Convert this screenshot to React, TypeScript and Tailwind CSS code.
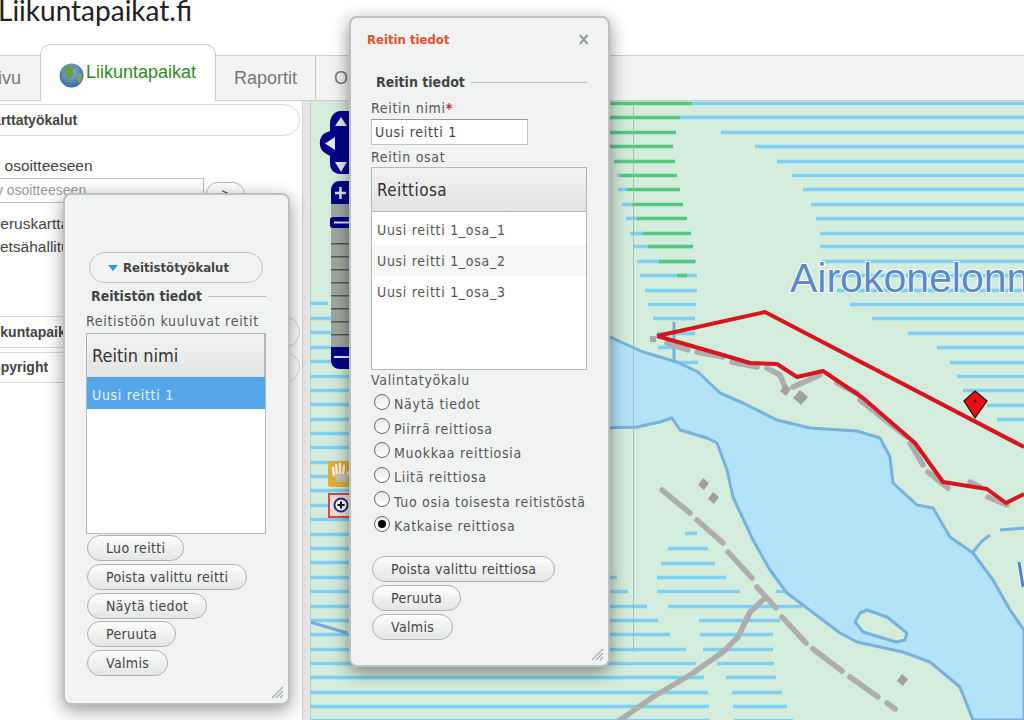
import { ReactNode } from "react";

// [y, x1, x2] blue hatching rows of the map
const blueRows: number[][] = [
  [103, 692, 1024], [117.4, 680, 1024], [131.8, 721, 1024], [146.2, 755, 1024], [160.6, 777, 1024],
  [175, 617, 620], [175, 792, 1024], [189.4, 618, 627], [189.4, 803, 1024], [203.8, 622, 632], [203.8, 811, 1024],
  [218.2, 626, 637], [218.2, 816, 1024], [232.6, 630, 643], [232.6, 820, 1024], [246.4, 633, 693], [246.4, 820, 1024],
  [261, 637, 696], [261, 822, 1024], [275, 640, 697], [275, 835, 1024], [289.6, 645, 697], [289.6, 837, 1024],
  [304, 648, 696], [304, 850, 1024], [318.4, 653, 695], [318.4, 872, 1024], [332.8, 657, 695], [332.8, 908, 1024],
  [347.2, 658, 688], [347.2, 937, 1024], [361.6, 677, 698], [361.6, 950, 1024], [376, 957, 1024], [390.4, 963, 1024],
  [404.8, 987, 1024], [419.2, 997, 1024],
  [533, 685, 697], [548, 668, 708], [563, 661, 715], [577, 610, 617], [577, 657, 726], [591, 610, 628], [591, 657, 740],
  [591, 776, 785], [606, 610, 647], [606, 668, 802], [620, 610, 658], [620, 699, 780], [634, 610, 670], [634, 700, 773],
  [649, 610, 686], [649, 703, 773], [663, 310, 696], [663, 717, 774], [677, 310, 704], [677, 726, 776], [692, 310, 708],
  [692, 732, 782], [706, 310, 709], [706, 733, 787], [720, 310, 710], [720, 734, 793],
  [303, 310, 328], [318, 310, 335], [332, 310, 337], [347, 310, 350], [361, 310, 350], [376, 310, 350], [390, 310, 350],
  [404, 310, 350], [419, 310, 350], [433, 310, 350], [447, 310, 350], [462, 310, 350], [476, 310, 350], [490, 310, 350],
  [505, 310, 350], [519, 310, 350], [534, 310, 350], [548, 310, 350], [562, 310, 350], [577, 310, 350], [591, 310, 350],
  [606, 310, 350], [620, 310, 350], [634, 310, 350], [649, 310, 350],
];

const greenRows: number[][] = [
  [103, 610, 692], [117.4, 610, 680], [131.8, 610, 676], [146.2, 610, 673], [160.6, 614, 675], [175, 620, 677],
  [189.4, 627, 680], [203.8, 632, 683], [218.2, 637, 687], [232.6, 643, 691], [246.4, 648, 693], [261, 659, 695],
  [275, 677, 687],
];

const roads = [
  "M662 490L690 513", "M697 520L723 543", "M728 552L752 578", "M757 587L776 608", "M782 617L806 643",
  "M813 649L842 671", "M850 677L878 697", "M887 703L895 709",
  "M765 598L750 612L738 637L723 652L690 675L653 697L620 720",
  "M667 343L688 350", "M697 352L723 357", "M732 362L757 367", "M767 368L780 375L785 387", "M793 387L820 375",
  "M837 383L857 393", "M860 400L907 437", "M910 443L923 465", "M928 472L948 488", "M970 482L980 487", "M988 497L1007 505",
];

const Map = () => (
  <svg className="block w-full h-full" viewBox="310 101 714 619" preserveAspectRatio="none">
    <rect x="310" y="101" width="714" height="619" fill="#d4ecdb" />
    {blueRows.map(([y, a, b], i) => (
      <line key={i} x1={a} x2={b} y1={Math.round(y) + 0.5} y2={Math.round(y) + 0.5} stroke="#7fcff2" strokeWidth="3.5" />
    ))}
    {greenRows.map(([y, a, b], i) => (
      <line key={i} x1={a} x2={b} y1={Math.round(y) + 0.5} y2={Math.round(y) + 0.5} stroke="#55c880" strokeWidth="3.5" />
    ))}
    <path d="M674 322V360" stroke="#77b0d8" strokeWidth="3" />

    {/* water */}
    <path
      d="M600 333L610 337L643 352L677 362L698 372L720 393L743 403L777 420L810 428L857 431L880 438L890 457L893 483L917 505L933 508L950 537L973 553L993 580L1010 610L1024 630V720H973L960 687L930 662L903 652L857 642L840 633L787 593L770 570L753 540L733 497L727 470L717 443L707 438L680 430L672 418L660 422L637 427L600 428Z"
      fill="#b3e3f8"
      stroke="#78b2da"
      strokeWidth="3"
      strokeLinejoin="round"
    />
    <path d="M855 622L860 613L867 610L887 617L907 633L905 640L896 642L863 632Z" fill="#d4ecdb" stroke="#78b2da" strokeWidth="3" strokeLinejoin="round" />
    <path d="M973 552L982 541L990 535M1000 530L1024 528" fill="none" stroke="#78b2da" strokeWidth="3" />
    <path d="M310 622L347 633" stroke="#77a8dc" strokeWidth="3" />

    {/* roads and buildings */}
    {roads.map((d) => (
      <path key={d} d={d} fill="none" stroke="#adadad" strokeWidth="5.5" strokeLinecap="round" strokeLinejoin="round" />
    ))}
    <rect x="650" y="336" width="6" height="6" fill="#aaaaaa" />
    <path d="M902 674l6 5-5 7-6-5zM703 478l6 5-5 7-6-5zM713 492l6 5-5 7-6-5zM785 384l6 5-5 7-6-5zM800 390l8 7-7 8-8-7z" fill="#a0a0a0" />

    <text
      x="790"
      y="292"
      fontFamily="'Liberation Sans', sans-serif"
      fontSize="41"
      fill="#5a8acb"
      stroke="#ffffff"
      strokeWidth="2"
      paintOrder="stroke"
    >
      Airokonelonni
    </text>
    <path d="M1019 562L1023 587" stroke="#ffffff" strokeWidth="5" />
    <path d="M1019 562L1023 587" stroke="#4f82c6" strokeWidth="3" />

    {/* route */}
    <path
      d="M657 336L765 312L1024 447M657 336L723 355L750 363L777 364L797 377L823 371L863 398L915 443L943 482L987 489L1006 503L1024 494"
      fill="none"
      stroke="#d8141f"
      strokeWidth="4"
      strokeLinejoin="round"
    />
    <path d="M975 391L987 401L975 418L964 401Z" fill="#ee0b14" stroke="#111111" strokeWidth="1.2" strokeLinejoin="round" />
    <circle cx="975" cy="401" r="1.5" fill="#222222" />

    {/* pan and zoom control */}
    <path d="M341 111C334 111 330 117 330 124V131L325 133C318 137 318 149 325 153L330 156V163C330 170 334 174 341 174H352V111Z" fill="#00008b" />
    <path d="M341 117L347 126H335Z M325 143.5L335 137V150Z M335 162H347L341 172Z" fill="#e6e9f2" />
    <rect x="331" y="204" width="20" height="143" fill="#9fa8a0" />
    {[243, 256, 269, 282, 295, 308, 321, 334].map((y) => (
      <rect key={y} x="331" y={y} width="20" height="1.5" fill="#55584f" />
    ))}
    <path d="M331 204V191C331 184 335 181 340 181H352V204Z" fill="#00008b" />
    <path d="M335 193H346M340.5 187V199" stroke="#e4e8ee" strokeWidth="2.5" />
    <rect x="330" y="217" width="22" height="11" rx="3" fill="#00008b" />
    <path d="M334 222.5H350" stroke="#e4e8ee" strokeWidth="2" />
    <path d="M331 347H352V369H340C335 369 331 366 331 360Z" fill="#00008b" />
    <path d="M334 357H350" stroke="#e4e8ee" strokeWidth="2" />

    <rect x="328" y="461" width="24" height="26" rx="3" fill="#e0ae35" />
    <path d="M334 475L333 468M337 474L336 465M340 474L340 464M343 474L344 466M346 476L349 472" fill="none" stroke="#f4f2ea" strokeWidth="2.4" strokeLinecap="round" />
    <path d="M334 474L337 482H347L349 474Z" fill="#c9c5bb" />
    <rect x="329" y="494" width="24" height="23" fill="#f3dcd8" stroke="#d84848" strokeWidth="2" />
    <circle cx="341" cy="505" r="6.5" fill="#ffffff" stroke="#22308f" strokeWidth="2" />
    <path d="M337.5 505H344.5M341 501.5V508.5" stroke="#111111" strokeWidth="2" />

    <path d="M633.5 101V652" stroke="#9fb4a6" strokeWidth="0.8" />
    <path d="M310.5 101V720" stroke="#b8c8c0" strokeWidth="0.8" />
  </svg>
);

const Pill = ({ children }: { children: ReactNode }) => (
  <div className="w-fit h-[26px] pl-[18px] pr-[18px] flex items-center rounded-full border border-[#aeb2b2] bg-gradient-to-b from-[#fdfdfd] to-[#e4e5e5] text-[#444] tracking-[0.35px] whitespace-nowrap">
    {children}
  </div>
);

const Legend = ({ children }: { children: ReactNode }) => (
  <div className="flex items-center gap-[6px] pl-[5px] font-bold text-[#444] tracking-normal">
    <span className="whitespace-nowrap">{children}</span>
    <div className="flex-1 h-px bg-[#b9bdbd]" />
  </div>
);

const Grip = () => (
  <svg className="absolute right-[4px] bottom-[4px]" width="13" height="13" viewBox="0 0 13 13">
    <path d="M1 12L12 1M5 12L12 5M9 12L12 9" stroke="#a9adad" strokeWidth="1.3" />
  </svg>
);

const Radio = ({ label, checked }: { label: string; checked?: boolean }) => (
  <div className="flex h-[24.4px] items-center pl-[3px]">
    <span className="w-[16px] h-[16px] -mt-[5px] mr-[4px] shrink-0 rounded-full border border-[#666] bg-gradient-to-b from-[#e8e8e8] to-white flex items-center justify-center">
      {checked && <span className="w-[8px] h-[8px] rounded-full bg-black" />}
    </span>
    <span className="whitespace-nowrap">{label}</span>
  </div>
);

const Globe = () => (
  <svg width="25" height="26" viewBox="0 0 25 26" className="shrink-0 mt-[5px]">
    <defs>
      <radialGradient id="glb" cx="45%" cy="35%" r="70%">
        <stop offset="0%" stopColor="#8fb8dc" />
        <stop offset="100%" stopColor="#2f62a0" />
      </radialGradient>
    </defs>
    <circle cx="12.5" cy="12.5" r="12" fill="url(#glb)" />
    <path d="M5 5C9 2 14 2 17 4L14 8L15 12L11 15L12 20L8 17L7 12L3 11Z" fill="#6f9a55" />
    <path d="M18 11L23 10C24 14 23 18 20 21L18 17Z" fill="#7ba15c" />
  </svg>
);

const routeParts = ["Uusi reitti 1_osa_1", "Uusi reitti 1_osa_2", "Uusi reitti 1_osa_3"];

const tools = ["Näytä tiedot", "Piirrä reittiosa", "Muokkaa reittiosia", "Liitä reittiosa", "Tuo osia toisesta reitistöstä"];

export default function App() {
  return (
    <div className="relative w-[1024px] h-[720px] overflow-hidden bg-white font-['Liberation_Sans',sans-serif]">
      {/* otsikko */}
      <div className="h-[44px] overflow-hidden">
        <div className="-ml-[2px] -mt-[10px] text-[28px] leading-[40px] text-[#222] font-['Lato',sans-serif]">Liikuntapaikat.fi</div>
      </div>

      {/* välilehdet */}
      <div className="flex items-end h-[57px] text-[18px] text-[#777]">
        <div className="w-[40px] h-[46px] overflow-hidden flex items-center border-t border-b border-[#ccc] bg-[#f3f3f3]">
          <span className="-ml-[38px]">Etusivu</span>
        </div>
        <div className="w-[176px] h-[57px] flex items-center gap-[2px] pl-[18px] rounded-t-[10px] border border-b-0 border-[#ccc] bg-white text-[#2f8a1e]">
          <Globe />
          <span className="-mt-[2px]">Liikuntapaikat</span>
        </div>
        <div className="w-[100px] h-[46px] flex items-center pl-[18px] border-t border-b border-r border-[#ccc] bg-[#f3f3f3]">Raportit</div>
        <div className="flex-1 h-[46px] flex items-center pl-[18px] border-t border-b border-[#ccc] bg-[#f3f3f3]">Ohje</div>
      </div>

      <div className="flex h-[619px]">
        {/* vasen palkki */}
        <div className="w-[302px] shrink-0 overflow-hidden text-[14px] text-[#444]">
          <div className="mt-[3px] -ml-[30px] w-[330px] h-[32px] flex items-center pl-[12px] rounded-[16px] border border-[#d8d8d8] font-bold">Karttatyökalut</div>
          <div className="mt-[20px] -ml-[35px] text-[15.5px] leading-[20px] whitespace-nowrap">Siirry osoitteeseen</div>
          <div className="mt-[2px] flex items-start">
            <div className="w-[204px] h-[25px] overflow-hidden flex items-center border border-[#bbb] border-l-0 text-[#999] whitespace-nowrap">
              <span className="-ml-[29px]">Siirry osoitteeseen</span>
            </div>
            <div className="ml-[2px] mt-[4px] w-[39px] h-[24px] flex items-center justify-center rounded-full border border-[#bbb]">&gt;</div>
          </div>
          <div className="mt-[8px] -ml-[10px] text-[15.5px] leading-[20px] whitespace-nowrap">Peruskartta</div>
          <div className="mt-[3px] -ml-[13px] text-[15.5px] leading-[20px] whitespace-nowrap">Metsähallitus</div>
          <div className="mt-[59px] -ml-[30px] w-[330px] h-[32px] flex items-center pl-[13px] rounded-[16px] border border-[#d8d8d8] font-bold whitespace-nowrap">Liikuntapaikat</div>
          <div className="mt-[4px] -ml-[30px] w-[330px] h-[31px] flex items-center pl-[11px] rounded-[16px] border border-[#d8d8d8] font-bold whitespace-nowrap">Copyright</div>
        </div>
        <div className="w-[8px] shrink-0 bg-[#e6e6e6] border-l border-[#cfcfcf]" />
        <div className="flex-1 min-w-0">
          <Map />
        </div>
      </div>

      {/* Reitistötyökalut-ikkuna */}
      <div className="absolute left-[63px] top-[193px] w-[227px] h-[512px] pl-[21px] pr-[22px] pt-[57px] rounded-[8px] border-2 border-[#bcc0c0] bg-[#f1f3f3] shadow-[0_5px_18px_rgba(0,0,0,0.42)] text-[14px] leading-[18px] text-[#555] tracking-[0.7px] font-['DejaVu_Sans',sans-serif] [font-stretch:condensed]">
        <div className="ml-[3px] w-[174px] h-[31px] flex items-center gap-[5px] pl-[18px] rounded-full border border-[#c4c8c8] font-bold text-[13px] text-[#444] tracking-normal">
          <svg width="10" height="6" viewBox="0 0 10 6">
            <path d="M0 0H10L5 6Z" fill="#2f97d8" />
          </svg>
          Reitistötyökalut
        </div>
        <div className="mt-[4px]">
          <Legend>Reitistön tiedot</Legend>
        </div>
        <div className="mt-[7px] whitespace-nowrap">Reitistöön kuuluvat reitit</div>
        <div className="mt-[3px] w-[180px] h-[201px] border border-[#b5b8b8] bg-white">
          <div className="h-[43px] flex items-center pl-[5px] pr-[2px] text-[18px] text-[#333] tracking-normal bg-gradient-to-b from-[#f2f2f2] to-[#e2e3e3] border-r border-[#b5b8b8]">Reitin nimi</div>
          <div className="h-[32px] flex items-center pl-[5px] pt-[3px] bg-[#55a5ea] text-[#e8f4ff]">Uusi reitti 1</div>
        </div>
        <div className="mt-[1px] ml-px flex flex-col gap-[2.8px]">
          <Pill>Luo reitti</Pill>
          <Pill>Poista valittu reitti</Pill>
          <Pill>Näytä tiedot</Pill>
          <Pill>Peruuta</Pill>
          <Pill>Valmis</Pill>
        </div>
        <Grip />
      </div>

      {/* Reitin tiedot -ikkuna */}
      <div className="absolute left-[349px] top-[16px] w-[261px] h-[651px] pl-[20px] pr-[21px] pt-[13px] rounded-[8px] border-2 border-[#bcc0c0] bg-[#f1f3f3] shadow-[0_5px_18px_rgba(0,0,0,0.45)] text-[14px] leading-[18px] text-[#555] tracking-[0.7px] font-['DejaVu_Sans',sans-serif] [font-stretch:condensed]">
        <div className="-ml-[4px] -mr-[3px] h-[18px] flex items-center justify-between font-bold text-[13px] text-[#e2522b] tracking-normal">
          <span>Reitin tiedot</span>
          <span className="-mt-[3px] text-[#8a9a9a] text-[17px] font-bold">×</span>
        </div>
        <div className="mt-[24px]">
          <Legend>Reitin tiedot</Legend>
        </div>
        <div className="mt-[8px]">
          Reitin nimi<span className="text-[#c8202a] font-bold">*</span>
        </div>
        <div className="mt-[2px] w-[157px] h-[26px] flex items-center pl-[3px] bg-white border border-[#c4c4c4] border-t-[#999] text-[#444]">Uusi reitti 1</div>
        <div className="mt-[3px]">Reitin osat</div>
        <div className="mt-[1px] w-[216px] h-[203px] border border-[#b5b8b8] bg-white">
          <div className="h-[44px] flex items-center pl-[5px] text-[17px] text-[#333] tracking-[0.4px] bg-gradient-to-b from-[#f2f2f2] to-[#e2e3e3] border-b border-[#b5b8b8]">Reittiosa</div>
          <div className="pt-[2px]">
            {routeParts.map((part, i) => (
              <div key={part} className={`h-[31px] flex items-center pl-[5px] ${i === 1 ? "bg-[#f5f6f6]" : ""}`}>{part}</div>
            ))}
          </div>
        </div>
        <div className="mt-[1px]">Valintatyökalu</div>
        <div className="mt-[3px]">
          {tools.map((t) => (
            <Radio key={t} label={t} />
          ))}
          <Radio label="Katkaise reittiosa" checked />
        </div>
        <div className="mt-[18px] ml-px flex flex-col gap-[2.8px]">
          <Pill>Poista valittu reittiosa</Pill>
          <Pill>Peruuta</Pill>
          <Pill>Valmis</Pill>
        </div>
        <Grip />
      </div>
    </div>
  );
}
